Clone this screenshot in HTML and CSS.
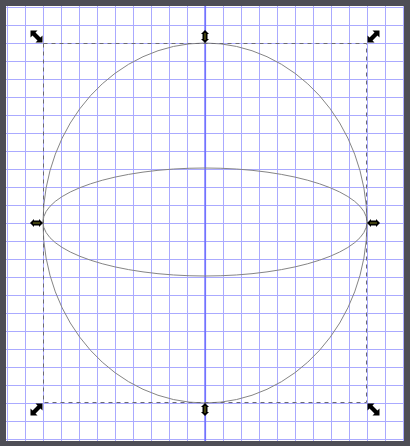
FILE: index.html
```html
<!DOCTYPE html>
<html>
<head>
<meta charset="utf-8">
<link rel="stylesheet" href="styles.css">
</head>
<body>
<div class="frame">
  <div class="canvas">
    <svg class="drawing" viewBox="6 6 398 435" width="398" height="435" xmlns="http://www.w3.org/2000/svg">
      <defs>
        <pattern id="grid" x="7" y="7" width="18" height="18" patternUnits="userSpaceOnUse">
          <rect x="0" y="0" width="1" height="18" fill="#aaaaff"/>
          <rect x="0" y="0" width="18" height="1" fill="#aaaaff"/>
        </pattern>
      </defs>
      <rect x="6" y="6" width="398" height="435" fill="#ffffff"/>
      <rect x="6" y="6" width="398" height="435" fill="url(#grid)"/>
      <rect x="204.3" y="6" width="1.8" height="435" fill="#7272ff"/>
      <ellipse cx="205" cy="223" rx="162" ry="180" fill="none" stroke="#858585" stroke-width="1"/>
      <ellipse cx="205" cy="222" rx="162" ry="54" fill="none" stroke="#858585" stroke-width="1"/>
      <rect x="43.5" y="43.5" width="323" height="359" fill="none" stroke="#6a6a72" stroke-width="1" stroke-dasharray="4 4"/>
      <g fill="#000">
        <path transform="translate(36.5 36.5)" d="M-6,-6 L1,-6 L-1,-4 L4,1 L6,-1 L6,6 L-1,6 L1,4 L-4,-1 L-6,1 Z"/>
        <path transform="translate(373.5 409.5)" d="M-6,-6 L1,-6 L-1,-4 L4,1 L6,-1 L6,6 L-1,6 L1,4 L-4,-1 L-6,1 Z"/>
        <path transform="translate(373.5 36.5) rotate(90)" d="M-6,-6 L1,-6 L-1,-4 L4,1 L6,-1 L6,6 L-1,6 L1,4 L-4,-1 L-6,1 Z"/>
        <path transform="translate(36.5 409.5) rotate(90)" d="M-6,-6 L1,-6 L-1,-4 L4,1 L6,-1 L6,6 L-1,6 L1,4 L-4,-1 L-6,1 Z"/>
        <path transform="translate(205 36.5)" d="M0,-6.5 L4,-2.5 L2.5,-2.5 L2.5,2.5 L4,2.5 L0,6.5 L-4,2.5 L-2.5,2.5 L-2.5,-2.5 L-4,-2.5 Z"/>
        <path transform="translate(205 409.5)" d="M0,-6.5 L4,-2.5 L2.5,-2.5 L2.5,2.5 L4,2.5 L0,6.5 L-4,2.5 L-2.5,2.5 L-2.5,-2.5 L-4,-2.5 Z"/>
        <path transform="translate(36.5 223) rotate(90)" d="M0,-6.5 L4,-2.5 L2.5,-2.5 L2.5,2.5 L4,2.5 L0,6.5 L-4,2.5 L-2.5,2.5 L-2.5,-2.5 L-4,-2.5 Z"/>
        <path transform="translate(373.5 223) rotate(90)" d="M0,-6.5 L4,-2.5 L2.5,-2.5 L2.5,2.5 L4,2.5 L0,6.5 L-4,2.5 L-2.5,2.5 L-2.5,-2.5 L-4,-2.5 Z"/>
      </g>
      <g stroke="#6a6a1a" stroke-width="1.2">
        <line x1="205" y1="33" x2="205" y2="40"/>
        <line x1="205" y1="406" x2="205" y2="413"/>
        <line x1="33" y1="223" x2="40" y2="223"/>
        <line x1="370" y1="223" x2="377" y2="223"/>
      </g>
    </svg>
  </div>
</div>
</body>
</html>
```
FILE: styles.css
```css
html, body {
  margin: 0;
  padding: 0;
  background: #4e4e56;
}
.frame {
  width: 410px;
  height: 446px;
  box-sizing: border-box;
  padding: 6px 6px 5px 6px;
  background: #4e4e56;
}
.canvas {
  position: relative;
  width: 398px;
  height: 435px;
  background-color: #ffffff;
  overflow: hidden;
}
.drawing {
  display: block;
  position: absolute;
  left: 0;
  top: 0;
}
```
